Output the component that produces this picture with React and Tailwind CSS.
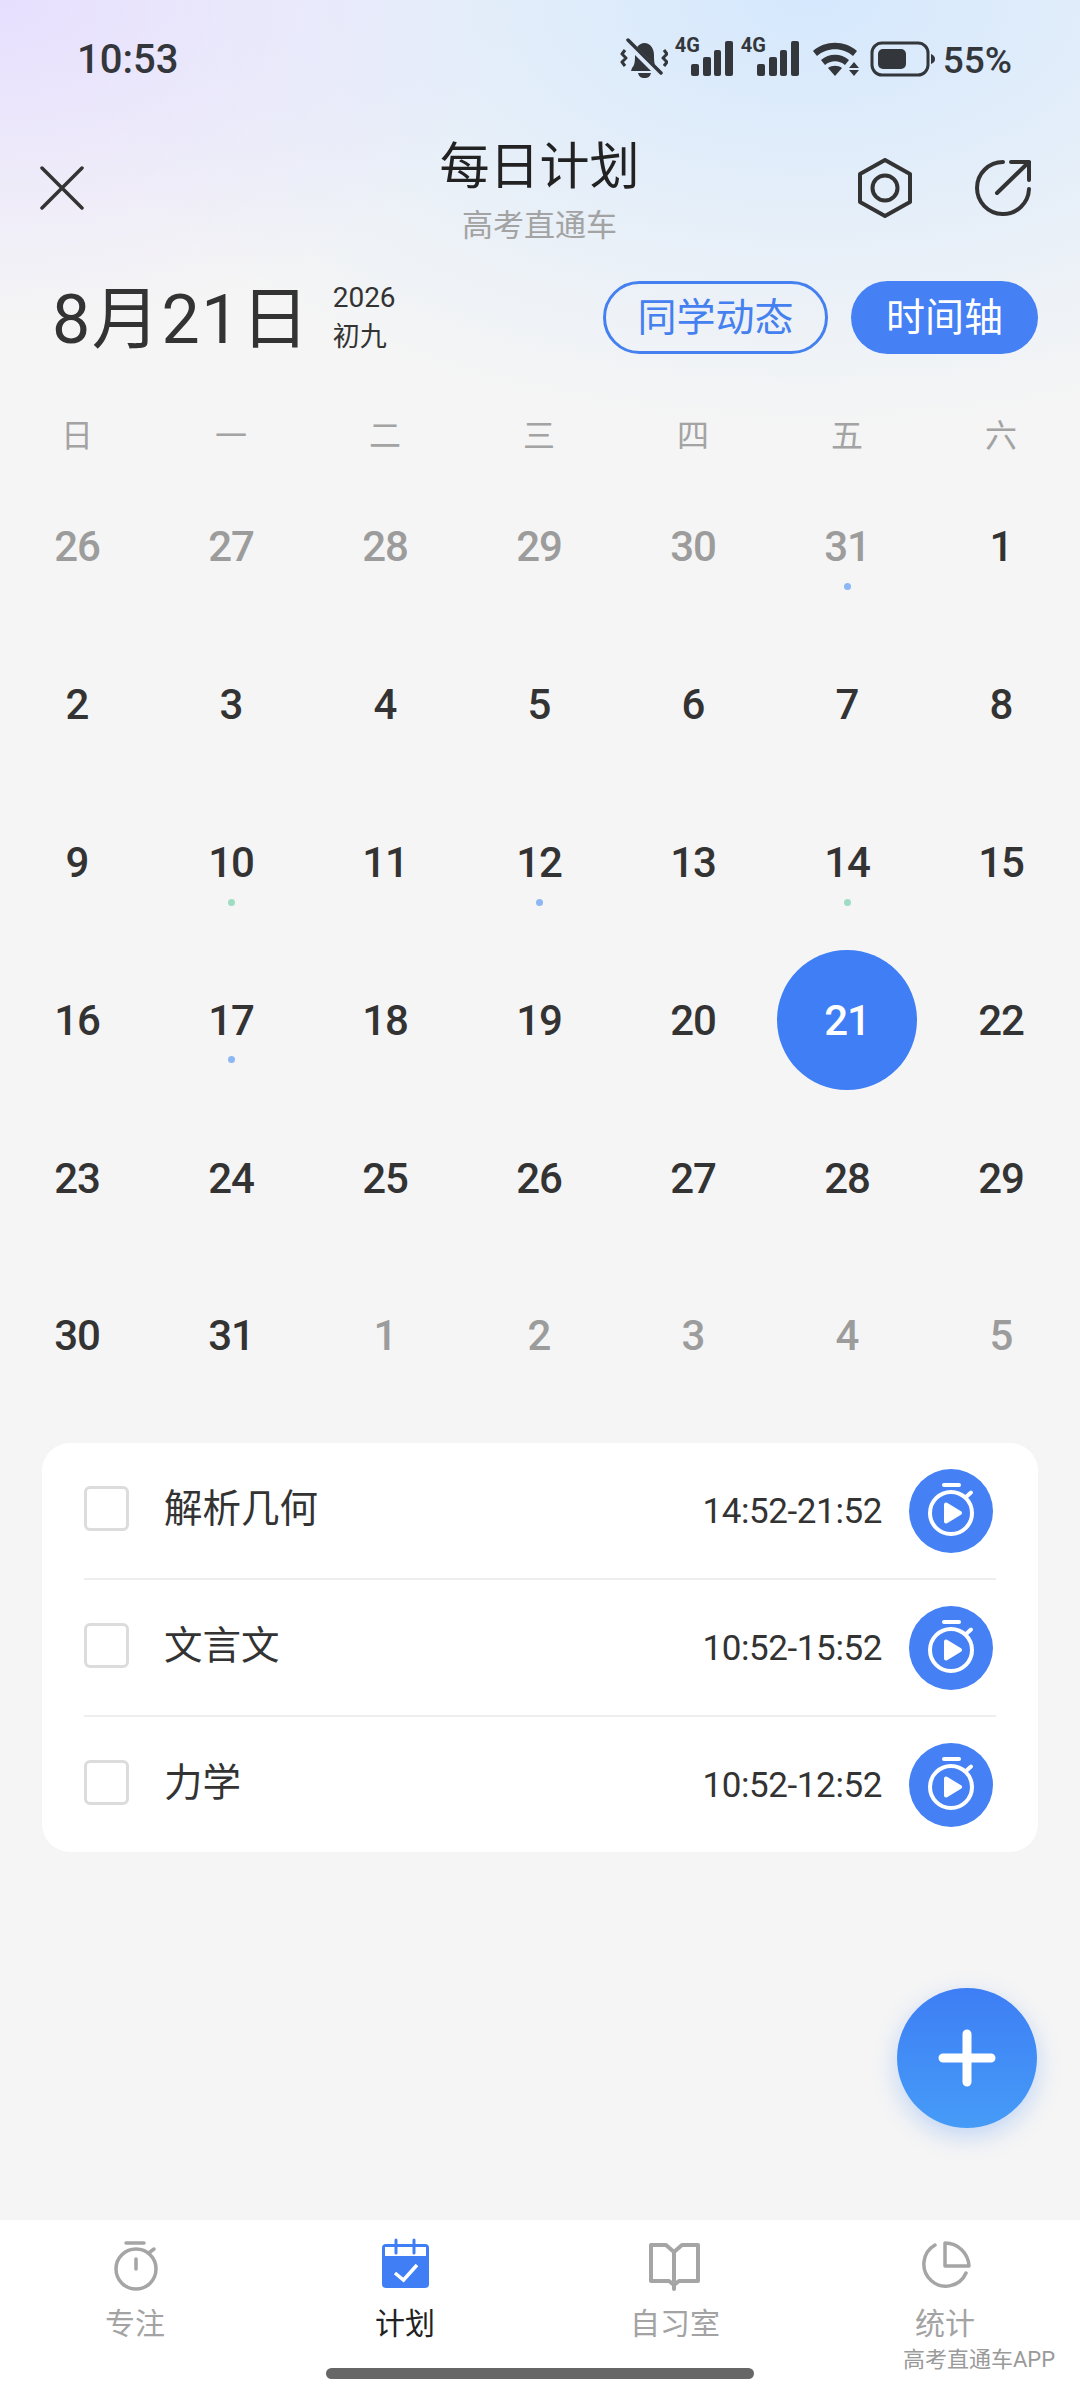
import { Fragment } from 'react';

const font = "font-['Roboto','Noto_Sans_CJK_SC',sans-serif]";

const weekDays = ['日', '一', '二', '三', '四', '五', '六'];

const days = [
  { n: 26, muted: true }, { n: 27, muted: true }, { n: 28, muted: true }, { n: 29, muted: true },
  { n: 30, muted: true }, { n: 31, muted: true, dot: 'blue' }, { n: 1 },
  { n: 2 }, { n: 3 }, { n: 4 }, { n: 5 }, { n: 6 }, { n: 7 }, { n: 8 },
  { n: 9 }, { n: 10, dot: 'green' }, { n: 11 }, { n: 12, dot: 'blue' }, { n: 13 }, { n: 14, dot: 'green' }, { n: 15 },
  { n: 16 }, { n: 17, dot: 'blue' }, { n: 18 }, { n: 19 }, { n: 20 }, { n: 21, selected: true }, { n: 22 },
  { n: 23 }, { n: 24 }, { n: 25 }, { n: 26 }, { n: 27 }, { n: 28 }, { n: 29 },
  { n: 30 }, { n: 31 }, { n: 1, muted: true }, { n: 2, muted: true }, { n: 3, muted: true }, { n: 4, muted: true }, { n: 5, muted: true },
];

const tasks = [
  { name: '解析几何', time: '14:52-21:52' },
  { name: '文言文', time: '10:52-15:52' },
  { name: '力学', time: '10:52-12:52' },
];

const BellOff = () => (
  <svg width="48" height="42" viewBox="0 0 48 42" fill="none">
    <path d="M12 30c3-3 3-8 3-13 0-7 4-12 9.500-12S34 10 34 17c0 5 0 10 3 13l1 3H11z" fill="#33363b" />
    <path d="M18 35h13c-1 4-3 5-6.500 5S19 39 18 35z" fill="#33363b" />
    <path d="M6 3l33 33" stroke="#dbe9fa" strokeWidth="7" />
    <path d="M8 2l33 33" stroke="#33363b" strokeWidth="3.500" strokeLinecap="round" />
    <path d="M5 12l-3 4 4 4-4 4 3 4M44 12l3 4-4 4 4 4-3 4" stroke="#33363b" strokeWidth="3" strokeLinejoin="round" />
  </svg>
);

const Signal = ({ className }) => (
  <div className={`relative w-[58px] h-[36px] ${className}`}>
    <span className="absolute left-0 top-[-6px] text-[20px] leading-[20px] font-bold text-[#33363b]">4G</span>
    <svg className="absolute left-0 top-0" width="58" height="36" viewBox="0 0 58 36" fill="#33363b">
      <rect x="16" y="23" width="8" height="12" rx="2" />
      <rect x="28" y="16" width="8" height="19" rx="2" />
      <rect x="39" y="9" width="7" height="26" rx="2" />
      <rect x="50" y="0" width="8" height="35" rx="2" />
    </svg>
  </div>
);

const Wifi = () => (
  <svg width="48" height="36" viewBox="0 0 48 36" fill="#33363b">
    <path d="M1 10C13-1 33-1 45 10l-4 5C31 6 15 6 5 15z" />
    <path d="M9 19c8-7 20-7 28 0l-4 5c-6-5-14-5-20 0z" />
    <path d="M16 27c4-3 10-3 14 0l-7 8z" />
    <path d="M42 21l5 6H37zM42 35l5-6H37z" />
  </svg>
);

const Battery = () => (
  <svg width="66" height="36" viewBox="0 0 66 36" fill="none">
    <rect x="2" y="2" width="56" height="32" rx="10" stroke="#33363b" strokeWidth="3" />
    <rect x="8" y="8" width="28" height="20" rx="5" fill="#33363b" />
    <path d="M61 13c3 1 4 3 4 5s-1 4-4 5z" fill="#33363b" />
  </svg>
);

const CloseIcon = () => (
  <svg width="44" height="44" viewBox="0 0 44 44" fill="none" stroke="#333" strokeWidth="3.500" strokeLinecap="round">
    <path d="M2 2l40 40M42 2L2 42" />
  </svg>
);

const HexIcon = () => (
  <svg width="56" height="60" viewBox="0 0 56 60" fill="none" stroke="#333" strokeWidth="4" strokeLinejoin="round">
    <path d="M28 2l25 14v28L28 58 3 44V16z" />
    <circle cx="28" cy="30" r="12.500" />
  </svg>
);

const ShareIcon = () => (
  <svg width="58" height="58" viewBox="0 0 58 58" fill="none" stroke="#333" strokeWidth="4" strokeLinecap="round" strokeLinejoin="round">
    <path d="M28 3A26 26 0 1 0 54 30" />
    <path d="M22 34L54 3M36 3h18v18" />
  </svg>
);

const StopwatchPlay = () => (
  <svg width="84" height="84" viewBox="0 0 84 84" fill="none" stroke="#fff" strokeWidth="4" strokeLinecap="round">
    <path d="M35 16h15" />
    <circle cx="42" cy="44" r="21" />
    <path d="M57 28l5-4.500" />
    <path d="M37 35.500v17l14-8.500z" fill="#fff" strokeLinejoin="round" />
  </svg>
);

const NavTimer = () => (
  <svg width="60" height="56" viewBox="0 0 60 56" fill="none" stroke="#a5a5a5" strokeWidth="3.500" strokeLinecap="round">
    <path d="M21 5h18" />
    <circle cx="31" cy="31" r="20" />
    <path d="M45 14l4-3M31 21v10" />
  </svg>
);

const NavCalendar = () => (
  <svg width="60" height="56" viewBox="0 0 60 56">
    <rect x="7" y="6" width="47" height="44" rx="4" fill="#3f7ef5" />
    <rect x="10" y="9" width="41" height="9" fill="#fff" />
    <path d="M21 2v13M39 2v13" stroke="#3f7ef5" strokeWidth="3" strokeLinecap="round" />
    <path d="M20 35l8.500 7L42 27" fill="none" stroke="#fff" strokeWidth="3.500" />
  </svg>
);

const NavBook = () => (
  <svg width="60" height="56" viewBox="0 0 60 56" fill="none" stroke="#a5a5a5" strokeWidth="4" strokeLinejoin="round">
    <path d="M6 7h15l8 7 8-7h16v36H34l-5 4-5-4H6z" />
    <path d="M29 14v30" />
    <path d="M29 47v4" strokeLinecap="round" />
  </svg>
);

const NavPie = () => (
  <svg width="60" height="56" viewBox="0 0 60 56" fill="none" stroke="#a5a5a5" strokeWidth="3.500" strokeLinecap="round" strokeLinejoin="round">
    <path d="M20 7A22 22 0 1 0 51 35" />
    <path d="M30 5v23h24A24 24 0 0 0 30 5z" />
  </svg>
);

const navItems = [
  { label: '专注', icon: NavTimer },
  { label: '计划', icon: NavCalendar, active: true },
  { label: '自习室', icon: NavBook },
  { label: '统计', icon: NavPie },
];

export default function App() {
  return (
    <div className={`${font} relative w-[1080px] h-[2400px] overflow-hidden flex flex-col bg-[#f5f5f5] bg-[radial-gradient(ellipse_520px_330px_at_0%_0%,#e6dfff,transparent),radial-gradient(ellipse_760px_430px_at_75%_0%,#d5e8fd,transparent)]`}>
      {/* status bar */}
      <div className="h-[118px] flex items-center justify-between pl-[77px] pr-[68px] text-[#33363b]">
        <span className="text-[40px] font-medium leading-none mt-[2px]">10:53</span>
        <div className="flex items-center">
          <BellOff />
          <Signal className="ml-[7px]" />
          <Signal className="ml-[8px]" />
          <div className="ml-[13px]"><Wifi /></div>
          <div className="ml-[10px]"><Battery /></div>
          <span className="text-[37px] font-medium leading-none ml-[7px] mt-[2px]">55%</span>
        </div>
      </div>

      {/* title */}
      <div className="h-[132px] flex items-center justify-between pl-[40px] pr-[47px]">
        <div className="w-[200px] mt-[8px]"><CloseIcon /></div>
        <div className="flex flex-col items-center mt-[15px] ml-[6px]">
          <span className="text-[50px] leading-[60px] text-[#222]">每日计划</span>
          <span className="text-[31px] leading-[40px] text-[#a3a3a3] mt-[9px]">高考直通车</span>
        </div>
        <div className="w-[200px] flex items-center justify-end gap-[62px] mt-[8px]">
          <HexIcon />
          <ShareIcon />
        </div>
      </div>

      {/* date row */}
      <div className="h-[134px] flex items-center pl-[52px] pr-[42px]">
        <span className="text-[68px] tracking-[1.6px] leading-none text-[#333] whitespace-nowrap mt-[6px]">8月21日</span>
        <div className="flex flex-col ml-[22px] text-[#333] mt-[2px]">
          <span className="text-[28px] leading-[36px]">2026</span>
          <span className="text-[27px] leading-[38px] mt-[2px]">初九</span>
        </div>
        <div className="ml-auto flex items-center gap-[23px]">
          <div className="w-[225px] h-[73px] pt-[2px] rounded-full border-[3px] border-[#4580f0] flex items-center justify-center text-[39px] text-[#4580f0]">同学动态</div>
          <div className="w-[187px] h-[73px] pt-[2px] rounded-full bg-[#4580f5] flex items-center justify-center text-[39px] text-white">时间轴</div>
        </div>
      </div>

      {/* week header */}
      <div className="grid grid-cols-7 pr-[2px] mt-[20px] h-[64px] items-center text-center text-[32px] text-[#a3a3a3]">
        {weekDays.map((d) => <span key={d}>{d}</span>)}
      </div>

      {/* calendar */}
      <div className="grid grid-cols-7 pr-[2px] auto-rows-[157.8px]">
        {days.map((d, i) => (
          <div key={i} className="relative flex items-center justify-center">
            {d.selected && <div className="absolute w-[140px] h-[140px] rounded-full bg-[#3f7ef5]" />}
            <span className={`relative text-[42px] font-medium tracking-[-1px] ${d.selected ? 'text-white' : d.muted ? 'text-[#9c9c9c]' : 'text-[#333]'}`}>{d.n}</span>
            {d.dot === 'blue' && <div className="absolute top-[115px] w-[7px] h-[7px] rounded-full bg-[#8db6f5]" />}
            {d.dot === 'green' && <div className="absolute top-[115px] w-[7px] h-[7px] rounded-full bg-[#9edcc4]" />}
          </div>
        ))}
      </div>

      {/* task card */}
      <div className="mt-[28px] mx-[42px] rounded-[28px] bg-white px-[42px]">
        {tasks.map((t, i) => (
          <Fragment key={t.name}>
            {i > 0 && <div className="h-[2px] bg-[#eeeeee]" />}
            <div className="h-[135px] flex items-center">
              <div className="w-[45px] h-[45px] rounded-[6px] border-[3px] border-[#dcdcdc] -mt-[3px]" />
              <span className="ml-[35px] text-[38.5px] text-[#333] -mt-[3px]">{t.name}</span>
              <span className="ml-auto text-[35px] tracking-[-0.4px] text-[#333] mt-[4px]">{t.time}</span>
              <div className="ml-[27px] mr-[3px] w-[84px] h-[84px] rounded-full bg-[#4580f5] flex items-center justify-center mt-[2px]"><StopwatchPlay /></div>
            </div>
          </Fragment>
        ))}
      </div>

      {/* add button */}
      <div className="absolute left-[897px] top-[1988px] w-[140px] h-[140px] rounded-full bg-gradient-to-b from-[#3e7ef5] to-[#469bf7] shadow-[0_8px_24px_rgba(70,140,245,0.3)] flex items-center justify-center">
        <svg width="58" height="58" viewBox="0 0 58 58" stroke="#fff" strokeWidth="9" strokeLinecap="round">
          <path d="M29 5v48M5 29h48" />
        </svg>
      </div>

      {/* bottom nav */}
      <div className="absolute left-0 right-0 top-[2220px] h-[180px] bg-white">
        <div className="grid grid-cols-4 pt-[18px]">
          {navItems.map((item) => {
            const Icon = item.icon;
            return (
              <div key={item.label} className="flex flex-col items-center">
                <Icon />
                <span className={`text-[30px] leading-[40px] mt-[10px] ${item.active ? 'text-[#222]' : 'text-[#a3a3a3]'}`}>{item.label}</span>
              </div>
            );
          })}
        </div>
        <span className="absolute left-[903px] top-[125px] text-[22px] leading-[30px] text-[#9a9a9a]">高考直通车APP</span>
        <div className="absolute left-[326px] top-[148px] w-[428px] h-[11px] rounded-full bg-[#666]" />
      </div>
    </div>
  );
}
